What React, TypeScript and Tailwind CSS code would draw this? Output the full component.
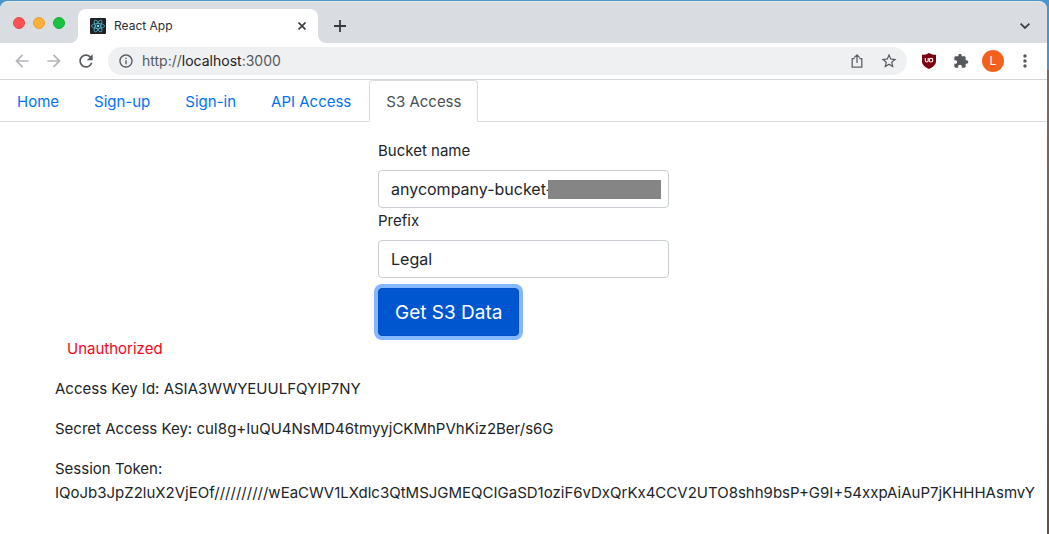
import { useState } from "react";
import type { ReactNode } from "react";
import {
  MdArrowBack,
  MdArrowForward,
  MdExtension,
  MdInfoOutline,
  MdMoreVert,
  MdRefresh,
  MdStarBorder,
} from "react-icons/md";

function ReactIcon() {
  return (
    <svg viewBox="0 0 16 16" className="size-4 shrink-0" aria-hidden="true">
      <rect width="16" height="16" rx="1" fill="#202124" />
      <g fill="none" stroke="#53b5d0" strokeWidth="0.8">
        <ellipse cx="8" cy="8" rx="6.6" ry="2.5" />
        <ellipse cx="8" cy="8" rx="6.6" ry="2.5" transform="rotate(60 8 8)" />
        <ellipse cx="8" cy="8" rx="6.6" ry="2.5" transform="rotate(120 8 8)" />
      </g>
      <circle cx="8" cy="8" r="1.3" fill="#61dafb" />
    </svg>
  );
}

function TabFlare({ side }: { side: "left" | "right" }) {
  return (
    <svg
      viewBox="0 0 8 8"
      aria-hidden="true"
      className={
        side === "left"
          ? "absolute bottom-0 -left-2 size-2"
          : "absolute bottom-0 -right-2 size-2 -scale-x-100"
      }
    >
      <path d="M8 0A8 8 0 0 1 0 8H8Z" fill="#fff" />
    </svg>
  );
}

function ShareIcon() {
  return (
    <svg viewBox="0 0 16 16" className="size-4" fill="none" stroke="#5f6368" strokeWidth="1.3" aria-hidden="true">
      <path d="M5.6 5.6H3.2V14.2H12.8V5.6H10.4M8 10V2M5.2 4.6L8 1.8L10.8 4.6" />
    </svg>
  );
}

function ShieldIcon() {
  return (
    <svg viewBox="0 0 16 16" className="size-4" aria-hidden="true">
      <path d="M8 0C6 1.3 3.5 1.8 1 1.8V8C1 12 4 14.3 8 16C12 14.3 15 12 15 8V1.8C12.500 1.800 10 1.300 8 0Z" fill="#7b0010" />
      <g fill="none" stroke="#fff" strokeWidth="1.1">
        <path d="M4.300 5V7.600A1.400 1.400 0 0 0 7.200 7.600V5" />
        <circle cx="10" cy="7.200" r="1.800" />
      </g>
    </svg>
  );
}

function IconButton({ label, children }: { label: string; children: ReactNode }) {
  return (
    <button type="button" aria-label={label} className="flex size-8 shrink-0 items-center justify-center text-[#55585d]">
      {children}
    </button>
  );
}

function TabStrip() {
  return (
    <header className="flex h-[41px] items-end bg-[#d9dce1]">
      <div className="flex h-[41px] w-[78px] shrink-0 items-center gap-2 pl-[13px]">
        <button type="button" aria-label="Close window" className="size-3 rounded-full border border-[#e9474a] bg-[#ff5254]" />
        <button type="button" aria-label="Minimize window" className="size-3 rounded-full border border-[#e5a033] bg-[#ffb03a]" />
        <button type="button" aria-label="Zoom window" className="size-3 rounded-full border border-[#18ad37] bg-[#16c440]" />
      </div>
      <div className="relative flex h-[34px] w-60 items-center gap-2 rounded-t-lg bg-white px-3">
        <TabFlare side="left" />
        <ReactIcon />
        <span className="grow text-[12px] text-[#2b2d31]">React App</span>
        <button type="button" aria-label="Close tab" className="flex w-2 justify-center">
          <svg viewBox="0 0 8 8" className="size-2" stroke="#3c4043" strokeWidth="1.7" aria-hidden="true">
            <path d="M0.500 0.500L7.500 7.500M7.500 0.500L0.500 7.500" />
          </svg>
        </button>
        <TabFlare side="right" />
      </div>
      <button type="button" aria-label="New tab" className="ml-4 flex h-[34px] w-3 items-center">
        <svg viewBox="0 0 12 12" className="size-3" stroke="#36393d" strokeWidth="1.8" aria-hidden="true">
          <path d="M6 0V12M0 6H12" />
        </svg>
      </button>
      <button type="button" aria-label="Search tabs" className="mr-4 ml-auto flex h-[34px] w-3 items-center justify-center">
        <svg viewBox="0 0 10 6" className="h-[6px] w-[10px]" fill="none" stroke="#3c4043" strokeWidth="1.8" aria-hidden="true">
          <path d="M0.600 0.700L5 5L9.400 0.700" />
        </svg>
      </button>
    </header>
  );
}

function Toolbar() {
  const [url, setUrl] = useState("http://localhost:3000");
  return (
    <div className="flex h-[37px] items-center border-b border-[#d5d6d8] bg-white pr-[6px] pl-[6px]">
      <button type="button" aria-label="Back" className="flex size-8 items-center justify-center text-[#b4b6b9]">
        <MdArrowBack className="size-5" />
      </button>
      <button type="button" aria-label="Forward" className="flex size-8 items-center justify-center text-[#b4b6b9]">
        <MdArrowForward className="size-5" />
      </button>
      <IconButton label="Reload">
        <MdRefresh className="size-5" />
      </IconButton>
      <div className="ml-[6px] flex h-7 min-w-0 grow items-center rounded-full bg-[#eff0f2] pl-[10px] text-[#55585d]">
        <MdInfoOutline className="size-4 shrink-0" />
        <div className="relative ml-2 grow text-[14px] leading-5">
          <input
            aria-label="Address"
            value={url}
            onChange={(e) => setUrl(e.target.value)}
            className="block w-full bg-transparent text-transparent caret-[#202124] outline-none"
          />
          <span aria-hidden="true" className="pointer-events-none absolute inset-0">
            http://<span className="text-[#202124]">localhost</span>:3000
          </span>
        </div>
        <IconButton label="Share">
          <ShareIcon />
        </IconButton>
        <IconButton label="Bookmark">
          <MdStarBorder className="size-[18px]" />
        </IconButton>
        <span className="w-[2px]" />
      </div>
      <div className="ml-[6px] flex items-center">
        <IconButton label="uBlock">
          <ShieldIcon />
        </IconButton>
        <IconButton label="Extensions">
          <MdExtension className="size-4" />
        </IconButton>
        <IconButton label="Profile">
          <span className="flex size-[22px] items-center justify-center rounded-full bg-[#f4611f] text-[12px] text-white">L</span>
        </IconButton>
        <IconButton label="Menu">
          <MdMoreVert className="size-5" />
        </IconButton>
      </div>
    </div>
  );
}

const links = ["Home", "Sign-up", "Sign-in", "API Access", "S3 Access"];

function Nav() {
  return (
    <nav className="flex gap-px border-b border-[#d9dcdf]">
      {links.map((name) => (
        <a
          key={name}
          href="#"
          aria-current={name === "S3 Access" ? "page" : undefined}
          className={
            name === "S3 Access"
              ? "-mb-px rounded-t-sm border border-[#d9dde1] border-b-white bg-white px-4 pt-[9px] pb-[7px] text-[#495057]"
              : "-mb-px border border-transparent px-4 pt-[9px] pb-[7px] text-[#0073f5]"
          }
        >
          {name}
        </a>
      ))}
    </nav>
  );
}

const field =
  "block h-[38px] w-full rounded-sm border border-[#c9ced4] bg-white px-3 text-[16px] text-[#212529] outline-none";
const fieldLabel = "block pt-px pb-[7px]";

function S3Form() {
  const [bucket, setBucket] = useState("anycompany-bucket-c");
  const [prefix, setPrefix] = useState("Legal");
  return (
    <form className="mx-auto w-[291px] pt-4" onSubmit={(e) => e.preventDefault()}>
      <label htmlFor="bucket" className={fieldLabel}>Bucket name</label>
      <div className="relative">
        <input id="bucket" className={field} value={bucket} onChange={(e) => setBucket(e.target.value)} />
        <span className="absolute top-[10px] right-2 h-[19px] w-[113px] bg-[#858585]" />
      </div>
      <label htmlFor="prefix" className={fieldLabel}>Prefix</label>
      <input id="prefix" className={field} value={prefix} onChange={(e) => setPrefix(e.target.value)} />
      <button
        type="submit"
        className="mt-[10px] block h-12 rounded-sm border border-[#004fc4] bg-[#0056cf] px-4 pt-px text-[19px] text-white ring-4 ring-[#85b7fc]"
      >
        Get S3 Data
      </button>
    </form>
  );
}

export default function App() {
  return (
    <div className="h-screen overflow-hidden bg-linear-to-b from-[#4c95c8] from-[70px] via-[#81695c] via-[70px] to-[#65513c] pt-px pr-[2px] font-[Inter,sans-serif]">
      <div className="h-full overflow-hidden rounded-t-lg border-t border-[#e4e7eb] bg-white text-[15px] leading-6 text-[#212529]">
        <TabStrip />
        <Toolbar />
        <main>
          <Nav />
          <S3Form />
          <section className="space-y-4 pt-px pl-[55px] whitespace-nowrap">
            <p className="pl-3 text-[#f5071c]">Unauthorized</p>
            <p>Access Key Id: ASIA3WWYEUULFQYIP7NY</p>
            <p>Secret Access Key: cuI8g+IuQU4NsMD46tmyyjCKMhPVhKiz2Ber/s6G</p>
            <p>
              Session Token:
              <br />
              IQoJb3JpZ2luX2VjEOf//////////wEaCWV1LXdlc3QtMSJGMEQCIGaSD1oziF6vDxQrKx4CCV2UTO8shh9bsP+G9I+54xxpAiAuP7jKHHHAsmvY
            </p>
          </section>
        </main>
      </div>
    </div>
  );
}
